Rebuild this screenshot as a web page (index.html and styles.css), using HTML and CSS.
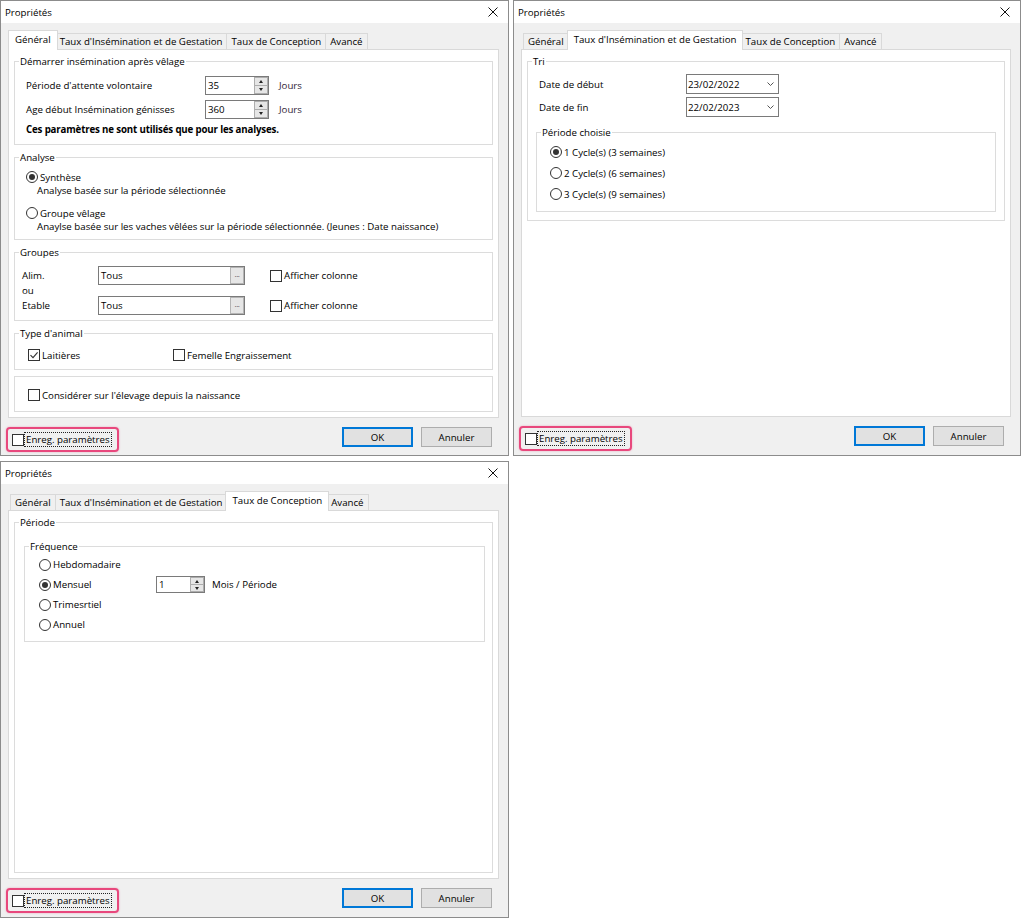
FILE: index.html
```html
<!DOCTYPE html>
<html lang="fr">
<head>
    <meta charset="UTF-8">
    <title>Propriétés</title>
    <link rel="stylesheet" href="styles.css">
</head>
<body>
<div class="desk">

    <!-- onglet Général -->
    <section class="dlg">
        <header class="titlebar">
            <span>Propriétés</span>
            <svg class="close" viewBox="0 0 10 10"><path d="M0.5 0.5 9.5 9.5 M9.5 0.5 0.5 9.5"/></svg>
        </header>
        <div class="dlg-body">
            <nav class="tabs">
                <span class="tab active">Général</span>
                <span class="tab">Taux d'Insémination et de Gestation</span>
                <span class="tab">Taux de Conception</span>
                <span class="tab">Avancé</span>
            </nav>
            <div class="panel">
                <fieldset class="grp">
                    <legend>Démarrer insémination après vêlage</legend>
                    <div class="grp-in start">
                        <div class="row h24">
                            <span class="lbl-179">Période d'attente volontaire</span>
                            <span class="spin"><span class="spin-val">35</span><span class="spin-btns"><i class="up"></i><i class="dn"></i></span></span>
                            <span class="unit">Jours</span>
                        </div>
                        <div class="row h24">
                            <span class="lbl-179">Age début Insémination génisses</span>
                            <span class="spin"><span class="spin-val">360</span><span class="spin-btns"><i class="up"></i><i class="dn"></i></span></span>
                            <span class="unit">Jours</span>
                        </div>
                        <p class="note">Ces paramètres ne sont utilisés que pour les analyses.</p>
                    </div>
                </fieldset>

                <fieldset class="grp">
                    <legend>Analyse</legend>
                    <div class="grp-in analyse">
                        <div class="opt"><span class="rd on"></span>Synthèse</div>
                        <div class="desc">Analyse basée sur la période sélectionnée</div>
                        <div class="opt opt-2"><span class="rd"></span>Groupe vêlage</div>
                        <div class="desc">Anaylse basée sur les vaches vêlées sur la période sélectionnée. (Jeunes : Date naissance)</div>
                    </div>
                </fieldset>

                <fieldset class="grp">
                    <legend>Groupes</legend>
                    <div class="grp-in groupes">
                        <div class="g-labels">
                            <div>Alim.</div>
                            <div>ou</div>
                            <div>Etable</div>
                        </div>
                        <div class="g-col">
                            <span class="txt">Tous<span class="dots">...</span></span>
                            <span class="txt">Tous<span class="dots">...</span></span>
                        </div>
                        <div class="g-col g-checks">
                            <div class="opt h19"><span class="cb"></span>Afficher colonne</div>
                            <div class="opt h19"><span class="cb"></span>Afficher colonne</div>
                        </div>
                    </div>
                </fieldset>

                <fieldset class="grp">
                    <legend>Type d'animal</legend>
                    <div class="grp-in animal">
                        <div class="opt w145"><span class="cb"><svg viewBox="0 0 10 10"><path d="M1.5 5.2 4 7.6 8.6 2.4"/></svg></span>Laitières</div>
                        <div class="opt"><span class="cb"></span>Femelle Engraissement</div>
                    </div>
                </fieldset>

                <fieldset class="grp">
                    <div class="grp-in naissance">
                        <div class="opt"><span class="cb"></span>Considérer sur l'élevage depuis la naissance</div>
                    </div>
                </fieldset>
            </div>
            <footer class="foot">
                <label class="save"><span class="cb"></span><span class="focus">Enreg. paramètres</span></label>
                <div class="btns">
                    <button class="btn default">OK</button>
                    <button class="btn">Annuler</button>
                </div>
            </footer>
        </div>
    </section>

    <!-- onglet Taux d'Insémination -->
    <section class="dlg">
        <header class="titlebar">
            <span>Propriétés</span>
            <svg class="close" viewBox="0 0 10 10"><path d="M0.5 0.5 9.5 9.5 M9.5 0.5 0.5 9.5"/></svg>
        </header>
        <div class="dlg-body">
            <nav class="tabs">
                <span class="tab">Général</span>
                <span class="tab active">Taux d'Insémination et de Gestation</span>
                <span class="tab">Taux de Conception</span>
                <span class="tab">Avancé</span>
            </nav>
            <div class="panel">
                <fieldset class="grp">
                    <legend>Tri</legend>
                    <div class="grp-in tri">
                        <div class="row date-row">
                            <span class="lbl-date">Date de début</span>
                            <span class="date">23/02/2022<svg viewBox="0 0 7 4"><path d="M0.5 0.5 3.5 3.5 6.5 0.5"/></svg></span>
                        </div>
                        <div class="row date-row">
                            <span class="lbl-date">Date de fin</span>
                            <span class="date">22/02/2023<svg viewBox="0 0 7 4"><path d="M0.5 0.5 3.5 3.5 6.5 0.5"/></svg></span>
                        </div>
                        <fieldset class="grp sub-cycle">
                            <legend>Période choisie</legend>
                            <div class="grp-in cycles">
                                <div class="opt"><span class="rd on"></span>1 Cycle(s) (3 semaines)</div>
                                <div class="opt"><span class="rd"></span>2 Cycle(s) (6 semaines)</div>
                                <div class="opt"><span class="rd"></span>3 Cycle(s) (9 semaines)</div>
                            </div>
                        </fieldset>
                    </div>
                </fieldset>
            </div>
            <footer class="foot">
                <label class="save"><span class="cb"></span><span class="focus">Enreg. paramètres</span></label>
                <div class="btns">
                    <button class="btn default">OK</button>
                    <button class="btn">Annuler</button>
                </div>
            </footer>
        </div>
    </section>

    <!-- onglet Taux de Conception -->
    <section class="dlg">
        <header class="titlebar">
            <span>Propriétés</span>
            <svg class="close" viewBox="0 0 10 10"><path d="M0.5 0.5 9.5 9.5 M9.5 0.5 0.5 9.5"/></svg>
        </header>
        <div class="dlg-body">
            <nav class="tabs">
                <span class="tab">Général</span>
                <span class="tab">Taux d'Insémination et de Gestation</span>
                <span class="tab active">Taux de Conception</span>
                <span class="tab">Avancé</span>
            </nav>
            <div class="panel">
                <fieldset class="grp fill">
                    <legend>Période</legend>
                    <div class="grp-in periode">
                        <fieldset class="grp sub-freq">
                            <legend>Fréquence</legend>
                            <div class="grp-in freq">
                                <div class="opt h20"><span class="rd"></span>Hebdomadaire</div>
                                <div class="row h20">
                                    <div class="opt w117"><span class="rd on"></span>Mensuel</div>
                                    <span class="spin spin-sm"><span class="spin-val">1</span><span class="spin-btns"><i class="up"></i><i class="dn"></i></span></span>
                                    <span class="unit-2">Mois / Période</span>
                                </div>
                                <div class="opt h20"><span class="rd"></span>Trimesrtiel</div>
                                <div class="opt h20"><span class="rd"></span>Annuel</div>
                            </div>
                        </fieldset>
                    </div>
                </fieldset>
            </div>
            <footer class="foot">
                <label class="save"><span class="cb"></span><span class="focus">Enreg. paramètres</span></label>
                <div class="btns">
                    <button class="btn default">OK</button>
                    <button class="btn">Annuler</button>
                </div>
            </footer>
        </div>
    </section>

</div>
</body>
</html>
```

FILE: styles.css
```css
* {
    box-sizing: border-box;
}
body {
    margin: 0;
    background: #fff;
    font-family: "Open Sans", "Noto Sans", sans-serif;
    font-size: 9.7px;
    color: #000;
}
.desk {
    display: grid;
    grid-template-columns: 509px 508px;
    grid-template-rows: 456px 457px;
    column-gap: 4px;
    row-gap: 5px;
}

/* fenêtre */
.dlg {
    display: flex;
    flex-direction: column;
    background: #f0f0f0;
    border: 1px solid #8c8c8c;
}
.titlebar {
    flex: none;
    height: 22px;
    background: #fff;
    display: flex;
    align-items: center;
    justify-content: space-between;
    padding: 0 10px 0 4px;
}
.close {
    width: 10px;
    height: 10px;
    fill: none;
    stroke: #111;
    stroke-width: 1;
}
.dlg-body {
    flex: 1;
    display: flex;
    flex-direction: column;
    padding: 7px 9px 0 7px;
}

/* onglets */
.tabs {
    display: flex;
    align-items: flex-end;
    height: 20px;
    margin-bottom: -1px;
    padding-left: 2px;
    position: relative;
    z-index: 1;
}
.tab {
    height: 17px;
    line-height: 15px;
    padding: 0 4px;
    border: 1px solid #d9d9d9;
    background: #f0f0f0;
    margin-left: -1px;
    white-space: nowrap;
}
.tab:first-child {
    margin-left: 0;
}
.tab.active {
    height: 20px;
    line-height: 17px;
    border-bottom: 0;
    background: #fff;
    padding: 0 6px;
    margin: 0 -2px;
    position: relative;
    z-index: 2;
}
.panel {
    flex: 1;
    display: flex;
    flex-direction: column;
    background: #fff;
    border: 1px solid #d9d9d9;
    padding: 5px;
}

/* groupes */
.grp {
    margin: 0 0 6px;
    padding: 0;
    border: 1px solid #dcdcdc;
    min-width: 0;
}
.grp:last-child {
    margin-bottom: 0;
}
.grp legend {
    margin-left: 4px;
    padding: 0 1px;
    line-height: 13px;
}
.row {
    display: flex;
    align-items: center;
}
.h24 {
    height: 24px;
}
.lbl-179 {
    width: 179px;
}
.start {
    padding: 5px 0 8px 11px;
}
.note {
    margin: 2px 0 0;
    font-weight: bold;
    line-height: 13px;
    letter-spacing: -0.15px;
}
.unit {
    margin-left: 10px;
    color: #2f2438;
}
.unit-2 {
    margin-left: 7px;
}

/* champs */
.spin {
    display: flex;
    width: 64px;
    height: 19px;
    border: 1px solid #7a7a7a;
    background: #fff;
}
.spin-sm {
    width: 49px;
    height: 17px;
}
.spin-val {
    flex: 1;
    padding-left: 2px;
    line-height: 17px;
}
.spin-sm .spin-val {
    line-height: 15px;
}
.spin-btns {
    width: 14px;
    display: flex;
    flex-direction: column;
}
.spin-btns i {
    flex: 1;
    display: flex;
    align-items: center;
    justify-content: center;
    background: #e6e6e6;
    border: 1px solid #adadad;
}
.spin-btns i + i {
    border-top: 0;
}
.spin-btns i::after {
    content: "";
    border: 2.5px solid transparent;
}
.spin-btns .up::after {
    border-top: 0;
    border-bottom: 3px solid #222;
}
.spin-btns .dn::after {
    border-bottom: 0;
    border-top: 3px solid #222;
}
.txt {
    display: flex;
    align-items: center;
    width: 147px;
    height: 19px;
    border: 1px solid #7a7a7a;
    background: #fff;
    padding-left: 2px;
}
.dots {
    margin-left: auto;
    width: 14px;
    height: 17px;
    background: #e6e6e6;
    border: 1px solid #b4b4b4;
    font-size: 8px;
    line-height: 12px;
    letter-spacing: -0.5px;
    text-align: center;
    color: #555;
}
.date {
    display: flex;
    align-items: center;
    justify-content: space-between;
    width: 93px;
    height: 20px;
    border: 1px solid #7a7a7a;
    background: #fff;
    padding: 0 4px 0 1px;
}
.date svg {
    width: 7px;
    height: 4px;
    fill: none;
    stroke: #555;
    stroke-width: 1;
}

/* cases et boutons radio */
.opt {
    display: flex;
    align-items: center;
    height: 14px;
}
.opt.h19 {
    height: 19px;
}
.opt.h20,
.row.h20 {
    height: 20px;
}
.rd,
.cb {
    flex: none;
    width: 12px;
    height: 12px;
    margin-right: 2px;
    border: 1px solid #333;
    background: #fff;
    display: flex;
    align-items: center;
    justify-content: center;
}
.rd {
    border-radius: 50%;
}
.rd.on::after {
    content: "";
    width: 6px;
    height: 6px;
    border-radius: 50%;
    background: #333;
}
.cb svg {
    width: 10px;
    height: 10px;
    fill: none;
    stroke: #333;
    stroke-width: 1.1;
}
.analyse {
    padding: 6px 0 5px 11px;
}
.desc {
    padding-left: 11px;
    line-height: 14px;
}
.opt-2 {
    margin-top: 8px;
}
.groupes {
    display: flex;
    padding: 7px 0 5px 7px;
}
.g-labels {
    width: 76px;
    padding-top: 1.5px;
    line-height: 15px;
}
.g-col {
    display: flex;
    flex-direction: column;
    gap: 11px;
}
.g-checks {
    margin-left: 25px;
}
.animal {
    display: flex;
    padding: 8px 0 7px 13px;
}
.w145 {
    width: 145px;
}
.naissance {
    padding: 11px 0 9px 13px;
}

/* tri */
.tri {
    padding: 6px 8px 8px;
}
.date-row {
    height: 20px;
}
.date-row + .date-row {
    margin-top: 3px;
}
.lbl-date {
    width: 150px;
    padding-left: 3px;
}
.sub-cycle {
    margin-top: 9px;
}
.cycles {
    display: flex;
    flex-direction: column;
    gap: 7px;
    padding: 6px 0 10px 13px;
}

/* conception */
.fill {
    flex: 1;
}
.periode {
    padding: 11px 7px 0 9px;
}
.freq {
    padding: 1.5px 0 6px 14px;
}
.w117 {
    width: 117px;
}

/* bas de fenêtre */
.foot {
    flex: none;
    height: 38px;
    display: flex;
    justify-content: space-between;
    align-items: flex-start;
    padding: 9px 7px 0 0;
}
.save {
    display: flex;
    align-items: center;
    margin-left: -2px;
    padding: 3px 5px 3px 4px;
    border: 2px solid #e8487d;
    border-radius: 4px;
    box-shadow: 0 0 2px rgba(232, 72, 125, .45);
}
.save .cb {
    margin-right: 0;
}
.focus {
    border: 1px dotted #222;
    padding: 0 1px;
    line-height: 13px;
}
.btns {
    display: flex;
    gap: 8px;
}
.btn {
    width: 71px;
    height: 20px;
    padding: 0;
    font: inherit;
    color: #000;
    background: #e1e1e1;
    border: 1px solid #adadad;
}
.btn.default {
    border-color: #0078d7;
    box-shadow: inset 0 0 0 1px #0078d7;
}
```
